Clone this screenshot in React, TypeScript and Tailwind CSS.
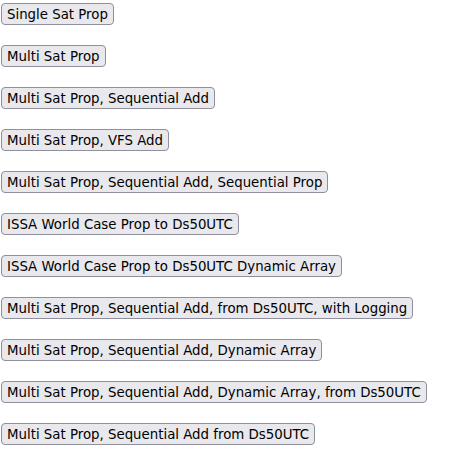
const LABELS = [
  "Single Sat Prop",
  "Multi Sat Prop",
  "Multi Sat Prop, Sequential Add",
  "Multi Sat Prop, VFS Add",
  "Multi Sat Prop, Sequential Add, Sequential Prop",
  "ISSA World Case Prop to Ds50UTC",
  "ISSA World Case Prop to Ds50UTC Dynamic Array",
  "Multi Sat Prop, Sequential Add, from Ds50UTC, with Logging",
  "Multi Sat Prop, Sequential Add, Dynamic Array",
  "Multi Sat Prop, Sequential Add, Dynamic Array, from Ds50UTC",
  "Multi Sat Prop, Sequential Add from Ds50UTC",
];

export default function App() {
  return (
    <div className="flex flex-col items-start gap-[20px] pt-[3px] pl-[1px] bg-white min-h-[472px]">
      {LABELS.map((label) => (
        <button
          key={label}
          className="h-[22px] px-[5px] pt-[2px] border border-[#8f8f9d] rounded-[4px] bg-[#e9e9ed] text-black text-[13.33px] leading-none whitespace-nowrap"
          style={{ fontFamily: '"DejaVu Sans", sans-serif' }}
        >
          {label}
        </button>
      ))}
    </div>
  );
}
